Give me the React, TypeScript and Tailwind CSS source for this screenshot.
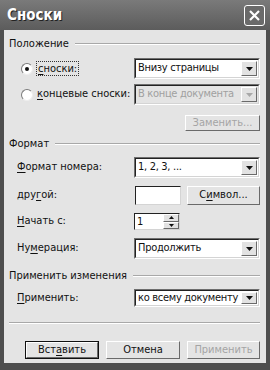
import React from "react";

const font = { fontFamily: '"DejaVu Sans Condensed", "Liberation Sans", Arial, sans-serif' };

const U = ({ children }: { children: React.ReactNode }) => <span className="underline underline-offset-2">{children}</span>;

const Arrow = ({ disabled }: { disabled?: boolean }) => (
    <div className="w-[16px] shrink-0 self-stretch m-[1px] bg-[#e2e2e2] border border-t-white border-l-white border-r-[#6a6a6a] border-b-[#6a6a6a] flex items-center justify-center">
        <svg width="7" height="4" viewBox="0 0 7 4">
            <path d="M0 0H7L3.5 4Z" fill={disabled ? "#a8a8a8" : "#111"} />
        </svg>
    </div>
);

const Select = ({ value, h, disabled }: { value: string; h: string; disabled?: boolean }) => (
    <div className={`w-[126px] shrink-0 ${h} flex items-stretch border border-t-[#6e6e6e] border-l-[#6e6e6e] border-r-white border-b-white ${disabled ? "bg-[#e4e4e4]" : "bg-white"}`}>
        <div className={`flex-1 min-w-0 flex items-center pl-[2px] border border-t-[#222] border-l-[#222] border-r-[#d4d4d4] border-b-[#d4d4d4] ${disabled ? "text-[#a0a0a0]" : "text-[#111]"}`}>
            <span className="flex-1 min-w-0 whitespace-nowrap overflow-hidden tracking-[-0.3px]">{value}</span>
            <Arrow disabled={disabled} />
        </div>
    </div>
);

const Btn = ({ children, w, h, disabled, def }: { children: React.ReactNode; w: string; h: string; disabled?: boolean; def?: boolean }) => (
    <div className={`${w} ${h} shrink-0 ${def ? "border border-[#111]" : ""} flex`}>
        <div className={`flex-1 flex items-center justify-center whitespace-nowrap bg-[#e4e4e4] border border-t-white border-l-white border-r-[#6a6a6a] border-b-[#6a6a6a] ${disabled ? "text-[#a4a4a4]" : "text-[#111]"}`}>
            {children}
        </div>
    </div>
);

const Header = ({ children }: { children: React.ReactNode }) => (
    <div className="flex items-center h-[14px] gap-[6px]">
        <span className="whitespace-nowrap">{children}</span>
        <div className="flex-1 h-[2px] border-t border-t-[#a8a8a8] border-b border-b-white" />
    </div>
);

const Radio = ({ checked }: { checked?: boolean }) => (
    <div className="w-[12px] h-[12px] rounded-full bg-white border border-t-[#7a7a7a] border-l-[#7a7a7a] border-r-[#eee] border-b-[#eee] flex items-center justify-center">
        {checked && <div className="w-[4px] h-[4px] rounded-full bg-[#111]" />}
    </div>
);

export default function App() {
    return (
        <div style={font} className="w-[270px] h-[370px] bg-[#4e4e4e] flex flex-col text-[11px] text-[#111]">
            <div className="h-[30px] flex items-center justify-between pl-[7px] pr-[5px] bg-gradient-to-b from-[#7a7a7a] to-[#5c5c5c]">
                <span className="text-white font-bold text-[15px] [text-shadow:1px_1px_0_#222]">Сноски</span>
                <div className="w-[21px] h-[21px] rounded-[3px] border border-white bg-[#6a6a6a] flex items-center justify-center">
                    <svg width="11" height="11" viewBox="0 0 11 11">
                        <path d="M1 1L10 10M10 1L1 10" stroke="white" strokeWidth="2.2" />
                    </svg>
                </div>
            </div>
            <div className="flex-1 mx-[4px] mb-[7px] bg-[#e4e4e4] pl-[5px] pr-[6px] pt-[7px] flex flex-col whitespace-nowrap">
                <Header>Положение</Header>
                <div className="mt-[7px] flex items-center h-[21px]">
                    <div className="ml-[12px] w-[13px]"><Radio checked /></div>
                    <span className="ml-[2px] border border-dotted border-[#333] px-[1px] leading-[13px]"><U>с</U>носки:</span>
                    <div className="flex-1" />
                    <Select value="Внизу страницы" h="h-[21px]" />
                </div>
                <div className="mt-[5px] flex items-center h-[21px]">
                    <div className="ml-[12px] w-[13px]"><Radio /></div>
                    <span className="ml-[3px]"><U>к</U>онцевые сноски:</span>
                    <div className="flex-1" />
                    <Select value="В конце документа" h="h-[21px]" disabled />
                </div>
                <div className="mt-[10px] flex justify-end">
                    <Btn w="w-[75px]" h="h-[16px]" disabled>Заменить...</Btn>
                </div>
                <div className="mt-[6px]"><Header>Формат</Header></div>
                <div className="mt-[6px] flex items-center h-[21px] pl-[8px]">
                    <span className="flex-1"><U>Ф</U>ормат номера:</span>
                    <Select value="1, 2, 3, ..." h="h-[21px]" />
                </div>
                <div className="mt-[8px] flex items-center h-[19px] pl-[8px]">
                    <span className="flex-1">дру<U>г</U>ой:</span>
                    <div className="w-[46px] h-[19px] bg-white border border-t-[#222] border-l-[#222] border-r-[#d4d4d4] border-b-[#d4d4d4]" />
                    <div className="ml-[6px]">
                        <Btn w="w-[73px]" h="h-[19px]">С<U>и</U>мвол...</Btn>
                    </div>
                </div>
                <div className="mt-[8px] flex items-center h-[17px] pl-[8px]">
                    <span className="flex-1"><U>Н</U>ачать с:</span>
                    <div className="w-[46px] h-[17px] mr-[80px] bg-white border border-t-[#222] border-l-[#222] border-r-[#d4d4d4] border-b-[#d4d4d4] flex">
                        <span className="flex-1 pl-[2px] leading-[15px]">1</span>
                        <div className="w-[16px] flex flex-col">
                            <div className="flex-1 bg-[#e2e2e2] border border-t-white border-l-white border-r-[#6a6a6a] border-b-[#6a6a6a] flex items-center justify-center">
                                <svg width="5" height="3" viewBox="0 0 5 3"><path d="M0 3H5L2.5 0Z" fill="#111" /></svg>
                            </div>
                            <div className="flex-1 bg-[#e2e2e2] border border-t-white border-l-white border-r-[#6a6a6a] border-b-[#6a6a6a] flex items-center justify-center">
                                <svg width="5" height="3" viewBox="0 0 5 3"><path d="M0 0H5L2.5 3Z" fill="#111" /></svg>
                            </div>
                        </div>
                    </div>
                </div>
                <div className="mt-[8px] flex items-center h-[21px] pl-[8px]">
                    <span className="flex-1">Ну<U>м</U>ерация:</span>
                    <Select value="Продолжить" h="h-[21px]" />
                </div>
                <div className="mt-[10px]"><Header>Применить изменения</Header></div>
                <div className="mt-[6px] flex items-center h-[18px] pl-[8px]">
                    <span className="flex-1"><U>П</U>рименить:</span>
                    <Select value="ко всему документу" h="h-[18px]" />
                </div>
                <div className="mt-[15px] h-[2px] border-t border-t-[#a8a8a8] border-b border-b-white" />
                <div className="mt-[17px] flex items-center pl-[16px] gap-[7px]">
                    <Btn w="w-[74px]" h="h-[18px]" def>Вст<U>а</U>вить</Btn>
                    <Btn w="w-[74px]" h="h-[18px]">Отмена</Btn>
                    <Btn w="w-[73px]" h="h-[18px]" disabled>Применить</Btn>
                </div>
            </div>
        </div>
    );
}
